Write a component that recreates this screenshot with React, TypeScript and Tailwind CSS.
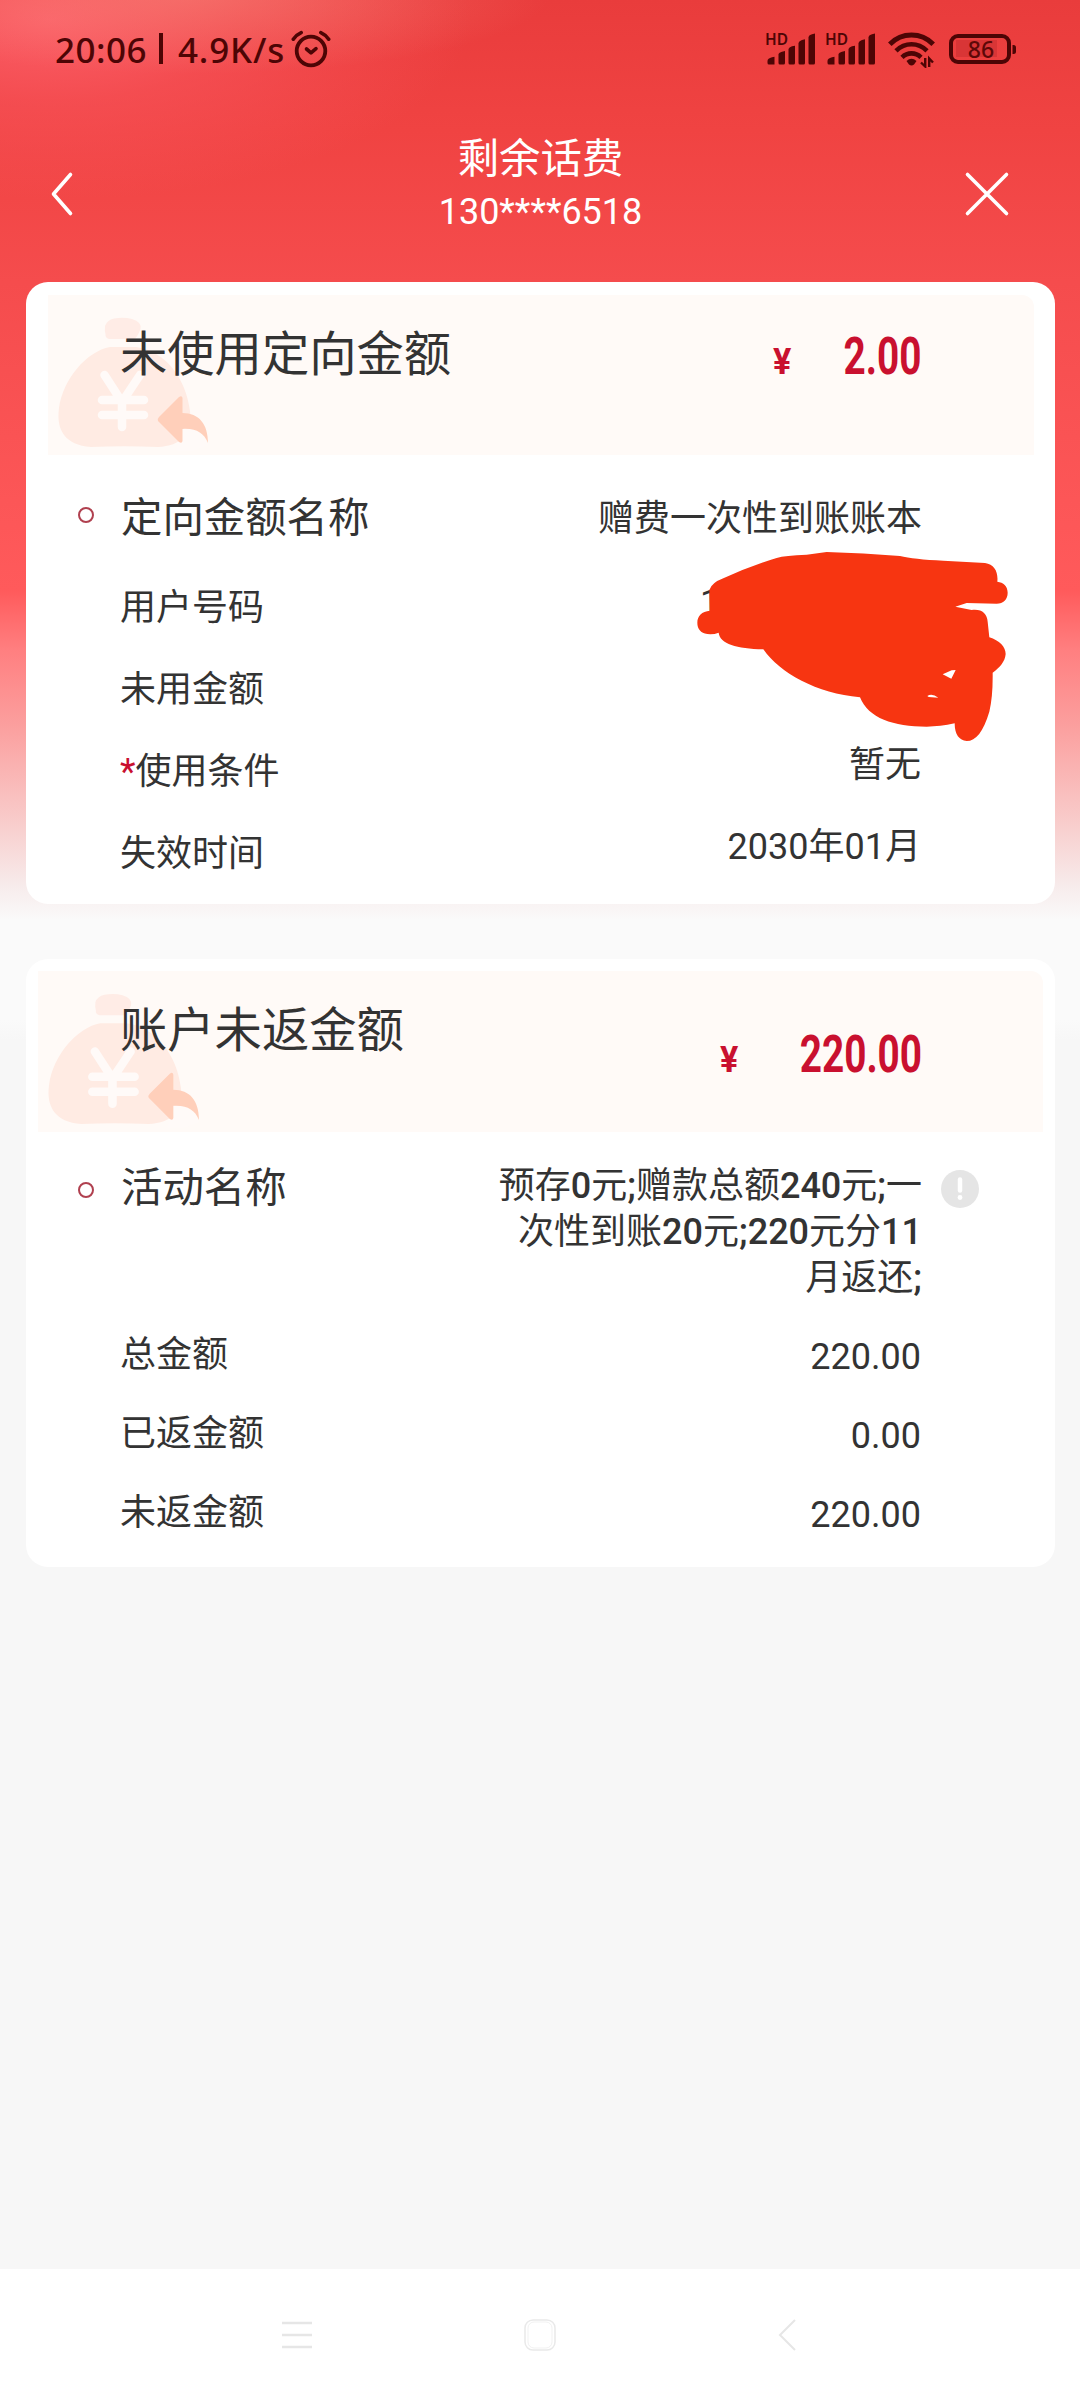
import type { ReactNode } from 'react';

interface HeadingProps {
  title: string;
  amount: string;
  className: string;
  amountClassName: string;
}

interface RowProps {
  label: ReactNode;
  value: string;
  className?: string;
  valueClassName?: string;
}

function AlarmIcon() {
  return (
    <svg width="40" height="38" viewBox="0 0 40 38" fill="none" stroke="#4d0505" strokeLinecap="round">
      <circle cx="20" cy="21" r="14.3" strokeWidth="3.8" />
      <path d="M15.500 19 20 22.800l5-4.200" strokeWidth="3.6" strokeLinejoin="round" />
      <path d="M2.3 9.2C4.5 6 7 4 10.2 2.6M37.7 9.2C35.5 6 33 4 29.8 2.6" strokeWidth="3.6" />
    </svg>
  );
}

function SignalIcon() {
  return (
    <svg className="overflow-visible" width="52" height="36" viewBox="0 0 52 36" fill="#4d0505">
      <text x="0" y="13.6" fontSize="16.5" fontWeight="600" fontFamily="Noto Sans" textLength="23" lengthAdjust="spacingAndGlyphs">
        HD
      </text>
      <path d="M2.500 30Q2.500 27.500 7 26.3L9.500 25.800V33.5H4Q2.500 33.5 2.500 32ZM13.5 23Q14 21.5 17 20.700L20 20V32Q20 33.5 18.5 33.5H15Q13.5 33.5 13.5 32ZM23.500 18Q24 16.2 27 15.3L30 14.700V32Q30 33.5 28.5 33.5H25Q23.5 33.5 23.5 32ZM33.5 12Q34 10 37 9L40 8.300V32Q40 33.5 38.5 33.5H35Q33.5 33.5 33.5 32ZM43.5 6Q44 4 47 3.2L50 2.600V32Q50 33.5 48.5 33.5H45Q43.5 33.5 43.5 32Z" />
    </svg>
  );
}

function WifiIcon() {
  return (
    <svg width="47" height="37" viewBox="0 0 47 37" fill="none" stroke="#4d0505">
      <path d="M1.800 13.200C14 1 33 1 45.200 13.200" strokeWidth="5" />
      <path d="M8 19.8C17 11.100 30 11.100 39 19.800" strokeWidth="4.600" />
      <path d="M14 26.3C19.5 21 27.5 21 33 26.300" strokeWidth="4.600" />
      <path d="M18.500 30Q23.500 25.500 28.500 30L26 33.500Q23.500 35.500 21 33.500Z" fill="#4d0505" stroke="none" />
      <path d="M37.200 27V35.500L33 31.500M41.200 36V27.500L45 31.500" strokeWidth="2.400" />
    </svg>
  );
}

function BatteryIcon() {
  return (
    <svg width="70" height="32" viewBox="0 0 70 32">
      <rect x="8" y="7" width="41" height="17" fill="#d93536" />
      <rect x="3" y="3" width="58" height="26" rx="7" fill="none" stroke="#4d0505" strokeWidth="4" />
      <path d="M64.500 12h1q2.500 0 2.500 2.500v4q0 2.500-2.500 2.500h-1z" fill="#4d0505" />
      <text x="33" y="24.500" fontSize="23" fontWeight="500" fontFamily="Noto Sans" textAnchor="middle" fill="#5d0808">
        86
      </text>
    </svg>
  );
}

function MoneyBag({ className }: { className: string }) {
  return (
    <svg className={className} viewBox="0 0 165 160">
      <path d="M66 23.500Q76 22 84 24Q94 27 92.500 34Q89 43 86 44H61Q57 43 57.500 39Q56.500 36 57 31Q59 25 66 23.500Z" fill="#ffece6" />
      <path d="M62 52H88C118 56 138 84 142 116C145 139 133 151 110 152Q76 150.500 43 152C17 150 8 135 11 113C15 84 39 56 62 52Z" fill="#ffebe3" />
      <path d="M56.500 80 74 107 92 80M74 107V132M54 105H96M54 120H96" fill="none" stroke="#fffaf8" strokeWidth="8.500" strokeLinecap="round" strokeLinejoin="round" />
      <path d="M134 134C146 132 156 138 160 150L145 156H128Z" fill="#fffaf8" />
      <path d="M110 126Q109 124 111 122L131 102Q134 100 134.500 103V118C151 118 160 129 160 148C156 138 148 133 134.500 134V146Q134 149 131 147Z" fill="#ffcfba" />
    </svg>
  );
}

function CardHeading({ title, amount, className, amountClassName }: HeadingProps) {
  return (
    <div className={`relative flex items-start justify-between rounded-tr-xl bg-[#fffaf7] ${className}`}>
      <MoneyBag className="absolute left-0 top-0 h-full w-auto" />
      <h2 className="relative pt-[37px] text-[47.300px] leading-[47px]">{title}</h2>
      <div className={`flex items-baseline font-bold leading-[50px] text-[#c9102f] ${amountClassName}`}>
        <span className="origin-right scale-x-[0.95] text-[36px]">¥</span>
        <span className="origin-right scale-x-[0.76] text-[51px]">{amount}</span>
      </div>
    </div>
  );
}

function Bullet({ className }: { className: string }) {
  return <i className={`ml-[52px] mr-[27px] size-4 shrink-0 rounded-full border-[2.500px] border-[#b0404f] ${className}`} />;
}

function Row({ label, value, className = 'h-[82px] pt-[3px]', valueClassName = '' }: RowProps) {
  return (
    <div className={`flex items-center justify-between pl-[94px] pr-[134px] text-[36px] leading-[46px] ${className}`}>
      <span>{label}</span>
      <span className={valueClassName}>{value}</span>
    </div>
  );
}

// Hand-painted marker stroke that hides the phone number and the unused amount
function Scribble() {
  return (
    <svg className="absolute left-[664px] top-[263px] h-[200px] w-[323.330px]" viewBox="90 45 970 600">
      <path
        fill="#f73511"
        fillRule="evenodd"
        d="M148 180Q155 158 190 145Q270 108 350 84Q375 76 440 74L500 66Q610 69 720 78Q760 88 850 92L975 99C1003 103 1015 125 1012 155C1030 157 1043 168 1043 188C1043 208 1030 221 1010 221L920 219L886 230L935 240C965 236 981 250 983 275L988 322C1018 332 1037 350 1037 372C1035 395 1020 412 998 428Q999 500 988 545C970 605 948 633 920 633C898 631 884 615 884 580Q840 590 800 590C700 590 625 565 600 502C470 490 360 430 310 358C230 355 180 342 176 308Q160 314 142 312C122 309 112 296 112 278C112 258 125 244 150 242ZM848 433L875 421L887 420L874 446ZM802 498Q816 489 835 503L806 501Z"
      />
    </svg>
  );
}

// Chinese characters stay regular while digits and punctuation are medium
function Mixed({ text }: { text: string }) {
  return (
    <>
      {text.split(/([0-9;]+)/).map((part, i) => (
        <span key={i} className={i % 2 ? 'font-medium' : 'font-normal'}>
          {part}
        </span>
      ))}
    </>
  );
}

export default function App() {
  return (
    <div className="flex h-[2400px] w-[1080px] flex-col overflow-hidden bg-[radial-gradient(ellipse_360px_80px_at_190px_-6px,#f6807699_0%,#f6807644_55%,#f6807600_100%),radial-gradient(ellipse_420px_180px_at_50px_20px,#fc5f68_0%,#f8545b99_45%,#f8545b00_100%),linear-gradient(180deg,#e93c3c_0px,#f04342_130px,#f54c4d_282px,#ff5a5b_590px,#ff7f80_650px,#fba1a0_730px,#f8d0cf_830px,#f7ebeb_885px,#fafafa_920px,#fafafa_1020px,#f7f7f7_1040px)] font-['Roboto','Noto_Sans_CJK_SC',sans-serif] text-[#333]">
      <div className="flex h-[100px] items-center justify-between pb-[2px] pl-[55px] pr-[62px]">
        <div className="flex items-center font-['Noto_Sans',sans-serif] text-[35px] font-medium leading-none text-[#4d0505]">
          <span className="w-[104px] tracking-[0.500px]">20:06</span>
          <span className="mb-[5px] mr-[15px] h-[31px] w-[4px] translate-y-[2px] bg-[#4d0505]" />
          <span className="w-[112px] tracking-[0.800px]">4.9K/s</span>
          <span className="w-[1px]" />
          <AlarmIcon />
        </div>
        <div className="flex items-center">
          <SignalIcon />
          <span className="w-2" />
          <SignalIcon />
          <span className="w-[11px]" />
          <WifiIcon />
          <span className="w-[13px]" />
          <BatteryIcon />
        </div>
      </div>

      <header className="flex h-[182px] items-center justify-between pl-[50px] pr-[70px] text-white">
        <svg className="mb-[-6px]" width="24" height="46" viewBox="0 0 24 46" fill="none" stroke="#fff" strokeWidth="3.600" strokeLinecap="round" strokeLinejoin="round">
          <path d="M20.500 3.500 3.500 23l17 19.500" />
        </svg>
        <div className="ml-[43px] flex flex-col items-center pb-[14px]">
          <h1 className="text-[41.400px] leading-[56px]">剩余话费</h1>
          <p className="text-[36px] leading-[50px]">130****6518</p>
        </div>
        <svg className="mb-[-6px]" width="46" height="46" viewBox="0 0 46 46" stroke="#fff" strokeWidth="3.600" strokeLinecap="round">
          <path d="m3.500 3.500 39 39M42.500 3.500l-39 39" />
        </svg>
      </header>

      <main className="flex flex-1 flex-col gap-[55px] pl-[26px] pr-[25px]">
        <section className="relative h-[622px] rounded-[22px] bg-white pt-[13px]">
          <CardHeading
            title="未使用定向金额"
            amount="2.00"
            className="ml-[22px] mr-[21px] h-[160px] pl-[72px] pr-[112px]"
            amountClassName="gap-[28px] pt-[37px]"
          />
          <div className="flex h-[110px] items-center pr-[133px] pt-[17px]">
            <Bullet className="mt-[-7px]" />
            <span className="flex-1 text-[41.400px]">定向金额名称</span>
            <span className="text-[36px]">赠费一次性到账账本</span>
          </div>
          <Row label="用户号码" value="1" valueClassName="w-[221px] -mt-[10px]" />
          <Row label="未用金额" value="" />
          <Row label={<><span className="text-[#c9102f]">*</span>使用条件</>} value="暂无" valueClassName="-mt-[14px]" />
          <Row label="失效时间" value="2030年01月" valueClassName="-mt-[14px]" />
          <Scribble />
        </section>

        <section className="h-[608px] rounded-[22px] bg-white pt-3">
          <CardHeading
            title="账户未返金额"
            amount="220.00"
            className="ml-3 mr-3 h-[161px] pl-[82px] pr-[121px]"
            amountClassName="gap-[23px] pt-[59px]"
          />
          <div className="flex h-[182px] items-start pt-[31px] leading-[46px]">
            <Bullet className="mt-[19px]" />
            <span className="flex-1 pt-[2px] text-[41.400px]">活动名称</span>
            <p className="text-right text-[36px] font-medium">
              <Mixed text="预存0元;赠款总额240元;一" />
              <br />
              <Mixed text="次性到账20元;220元分11" />
              <br />
              <Mixed text="月返还;" />
            </p>
            <svg className="ml-[19px] mr-[76px] mt-[7px]" width="38" height="38" viewBox="0 0 38 38">
              <circle cx="19" cy="19" r="19" fill="#e5e5e5" />
              <path d="M19 9.500v11" stroke="#fff" strokeWidth="4.500" strokeLinecap="round" />
              <circle cx="19" cy="27.500" r="2.400" fill="#fff" />
            </svg>
          </div>
          <Row className="h-[79px] pt-[3px]" label="总金额" value="220.00" valueClassName="mt-[4px]" />
          <Row className="h-[79px] pt-[3px]" label="已返金额" value="0.00" valueClassName="mt-[4px]" />
          <Row className="h-[79px] pt-[3px]" label="未返金额" value="220.00" valueClassName="mt-[4px]" />
        </section>
      </main>

      <footer className="flex h-[131px] items-center justify-between bg-white pl-[281px] pr-[283px]">
        <svg width="32" height="32" viewBox="0 0 32 32" stroke="#e6e6e6" strokeWidth="2.500">
          <path d="M1 4h30M1 16h30M1 28h30" />
        </svg>
        <svg className="ml-[-11px]" width="34" height="34" viewBox="0 0 34 34" fill="none" stroke="#e9e9e9">
          <rect x="2" y="2" width="30" height="30" rx="8" strokeWidth="1.500" />
          <rect x="5" y="4" width="24" height="26" rx="6" strokeWidth="1" stroke="#f1f1f1" />
        </svg>
        <svg width="20" height="34" viewBox="0 0 20 34" fill="none" stroke="#e6e6e6" strokeWidth="2">
          <path d="M18 2 3 17l15 15" />
        </svg>
      </footer>
    </div>
  );
}
